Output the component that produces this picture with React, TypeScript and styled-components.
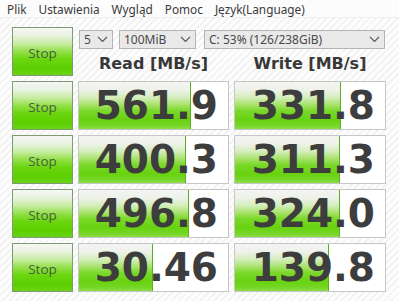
import React from 'react';
import styled, { createGlobalStyle } from 'styled-components';

const GlobalStyle = createGlobalStyle`
  html, body {
    margin: 0;
    padding: 0;
  }
  body {
    width: 399px;
    height: 301px;
    overflow: hidden;
    font-family: 'Noto Sans', 'Liberation Sans', sans-serif;
    background-color: #fafafa;
    background-image: repeating-linear-gradient(
      135deg,
      #fdfdfd 0px,
      #fdfdfd 3px,
      #f3f3f3 3px,
      #f3f3f3 5px
    );
  }
`;

const MenuBar = styled.div`
  height: 18px;
  display: flex;
  align-items: center;
  gap: 12px;
  padding-left: 7px;
  background: #fcfcfc;
  border-bottom: 1px solid #efefef;
  box-sizing: border-box;
`;

const MenuItem = styled.span`
  font-family: 'Noto Sans', sans-serif;
  font-size: 11.8px;
  color: #3a3a3a;
  line-height: 18px;
`;

const Main = styled.div`
  display: grid;
  grid-template-columns: 61px 151px 152px;
  grid-auto-rows: 49px;
  column-gap: 5px;
  row-gap: 5px;
  padding: 9px 0 0 12px;
`;

const StopButton = styled.div`
  box-sizing: border-box;
  border: 1px solid #7f9a74;
  display: flex;
  align-items: center;
  justify-content: center;
  background: linear-gradient(
    to bottom,
    #f6f7f5 0%,
    #eaf3e2 16%,
    #c6eca0 34%,
    #94e04a 50%,
    #6cd610 66%,
    #5ccf00 86%,
    #6ad316 100%
  );
  font-family: 'Open Sans', 'DejaVu Sans', sans-serif;
  font-size: 13.5px;
  color: #46603a;
  padding-top: 2px;
`;

const Header = styled.div`
  grid-column: span 2;
  display: flex;
  flex-direction: column;
`;

const SelectRow = styled.div`
  display: flex;
  margin-top: 3px;
  padding-left: 1px;
  height: 19px;
`;

const Select = styled.div<{ $w: number; $gap: number }>`
  box-sizing: border-box;
  width: ${(p) => p.$w}px;
  margin-right: ${(p) => p.$gap}px;
  height: 19px;
  border: 1px solid #b4b4b4;
  background: #e9e9e9;
  display: flex;
  align-items: center;
  justify-content: space-between;
  padding: 0 4px 0 4px;
  font-family: 'Noto Sans', 'Liberation Sans', sans-serif;
  font-size: 12px;
  color: #4a4a4a;
`;

const Labels = styled.div`
  display: grid;
  grid-template-columns: 151px 152px;
  column-gap: 5px;
  margin-top: 5px;
`;

const Label = styled.div`
  text-align: center;
  font-family: 'DejaVu Sans', Verdana, sans-serif;
  font-weight: bold;
  font-size: 16px;
  line-height: 19px;
  color: #383838;
`;

const ValueBox = styled.div`
  box-sizing: border-box;
  border: 1px solid #c6c6c6;
  background: #ffffff;
  display: grid;
  overflow: hidden;
`;

const Fill = styled.div`
  grid-area: 1 / 1;
  height: 100%;
  box-sizing: border-box;
  border-right: 1px solid #5aae24;
  background: linear-gradient(
    to bottom,
    #f4f4f3 0%,
    #eef2ea 16%,
    #d4eebd 32%,
    #a6e267 48%,
    #7ad82a 60%,
    #68d210 78%,
    #74d624 90%,
    #94df52 100%
  );
`;

const Number = styled.div`
  grid-area: 1 / 1;
  text-align: right;
  padding-right: 10px;
  font-family: 'DejaVu Sans', Verdana, sans-serif;
  font-weight: bold;
  font-size: 39px;
  line-height: 48px;
  color: #3d3d3d;
  position: relative;
`;

const Chevron = () => (
  <svg width="11" height="7" viewBox="0 0 11 7">
    <path d="M1 1 L5.5 5.5 L10 1" fill="none" stroke="#5a5a5a" strokeWidth="1.2" />
  </svg>
);

const rows = [
  { read: '561.9', write: '331.8' },
  { read: '400.3', write: '311.3' },
  { read: '496.8', write: '324.0' },
  { read: '30.46', write: '139.8' },
];

const fillPct = (v: string) => {
  const n = parseFloat(v);
  return Math.max(0, Math.min(1, (Math.log10(n) + 1) / 5)) * 100;
};

const Value: React.FC<{ value: string }> = ({ value }) => (
  <ValueBox>
    <Fill style={{ width: `${fillPct(value)}%` }} />
    <Number>{value}</Number>
  </ValueBox>
);

export default function App() {
  return (
    <>
      <GlobalStyle />
      <MenuBar>
        <MenuItem>Plik</MenuItem>
        <MenuItem>Ustawienia</MenuItem>
        <MenuItem>Wygląd</MenuItem>
        <MenuItem>Pomoc</MenuItem>
        <MenuItem>Język(Language)</MenuItem>
      </MenuBar>
      <Main>
        <StopButton>Stop</StopButton>
        <Header>
          <SelectRow>
            <Select $w={34} $gap={6}>
              <span>5</span>
              <Chevron />
            </Select>
            <Select $w={77} $gap={8}>
              <span>100MiB</span>
              <Chevron />
            </Select>
            <Select $w={181} $gap={0}>
              <span>C: 53% (126/238GiB)</span>
              <Chevron />
            </Select>
          </SelectRow>
          <Labels>
            <Label>Read [MB/s]</Label>
            <Label>Write [MB/s]</Label>
          </Labels>
        </Header>
        {rows.map((r, i) => (
          <React.Fragment key={i}>
            <StopButton>Stop</StopButton>
            <Value value={r.read} />
            <Value value={r.write} />
          </React.Fragment>
        ))}
      </Main>
    </>
  );
}
